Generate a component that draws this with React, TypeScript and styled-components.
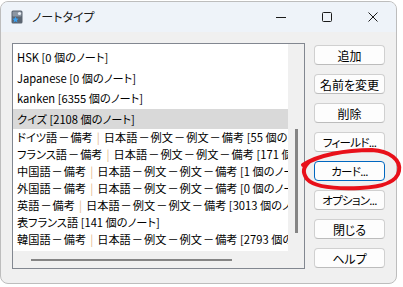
import React from 'react';
import styled, { createGlobalStyle } from 'styled-components';

const GlobalStyle = createGlobalStyle`
    html, body {
        margin: 0;
        padding: 0;
        background: #ffffff;
    }
    body {
        font-family: "Noto Sans CJK JP", "Noto Sans", sans-serif;
        font-feature-settings: "palt";
        color: #000;
    }
`;

const Page = styled.div`
    position: relative;
    width: 403px;
    height: 287px;
    overflow: hidden;
`;

const Window = styled.div`
    box-sizing: border-box;
    width: 397px;
    height: 283px;
    margin-top: 1px;
    border: 1px solid #bdbdbd;
    border-radius: 8px;
    overflow: hidden;
    background: #f0f0f0;
    display: flex;
    flex-direction: column;
`;

const TitleBar = styled.div`
    height: 30px;
    flex: none;
    background: #eef3f9;
    display: flex;
    align-items: center;
`;

const AppIcon = styled.div`
    width: 12px;
    height: 14px;
    margin-left: 10px;
    margin-right: 9px;
    display: flex;
`;

const Title = styled.div`
    flex: 1;
    font-size: 12px;
    color: #1a1a1a;
    line-height: 30px;
`;

const Caption = styled.div`
    width: 46px;
    height: 30px;
    display: flex;
    align-items: center;
    justify-content: center;
`;

const Client = styled.div`
    flex: 1;
    display: flex;
    padding: 11px 0 0 11px;
    gap: 9px;
`;

const ListBox = styled.div`
    box-sizing: border-box;
    width: 293px;
    height: 226px;
    border: 1px solid #828790;
    background: #f0f0f0;
    display: grid;
    grid-template-columns: 1fr 16px;
    grid-template-rows: 1fr 17px;
`;

const Items = styled.div`
    background: #ffffff;
    padding-top: 3px;
    overflow: hidden;
`;

const Row = styled.div<{ $tall?: boolean; $selected?: boolean }>`
    height: ${p => (p.$tall ? '20.5px' : '17px')};
    line-height: ${p => (p.$tall ? '20.5px' : '17px')};
    padding-left: 4px;
    font-size: 11.2px;
    white-space: nowrap;
    overflow: hidden;
    background: ${p => (p.$selected ? '#d9d9d9' : 'transparent')};
`;

const Dash = styled.span`
    margin: 0 1px;
`;

const Bar = styled.span`
    color: #e2b98c;
    margin: 0 4px;
`;

const VTrack = styled.div`
    display: flex;
    justify-content: center;
    padding-top: 85px;
`;

const VThumb = styled.div`
    width: 3px;
    height: 104px;
    background: #858585;
`;

const HTrack = styled.div`
    padding: 8px 0 0 18px;
`;

const HThumb = styled.div`
    width: 201px;
    height: 2px;
    background: #858585;
`;

const Buttons = styled.div`
    display: flex;
    flex-direction: column;
    gap: 9px;
    padding-top: 2px;
`;

const Button = styled.div<{ $focused?: boolean; $tight?: boolean }>`
    box-sizing: border-box;
    width: 71px;
    height: 20px;
    border: 1px solid ${p => (p.$focused ? '#0067c0' : '#d0d0d0')};
    border-bottom-color: ${p => (p.$focused ? '#0067c0' : '#bcbcbc')};
    border-radius: 4px;
    background: #fdfdfd;
    display: flex;
    align-items: center;
    justify-content: center;
    font-size: ${p => (p.$tight ? '11.5px' : '12px')};
    letter-spacing: ${p => (p.$tight ? '-0.7px' : '0')};
    white-space: nowrap;
`;

const Scribble = styled.svg`
    position: absolute;
    left: 0;
    top: 0;
    pointer-events: none;
`;

const sep = (head: string, count: string) => (
    <>
        {head}<Dash>－</Dash>備考<Bar>|</Bar>日本語<Dash>－</Dash>例文<Dash>－</Dash>例文<Dash>－</Dash>備考 [{count} 個のノート]
    </>
);

const rows: { label: React.ReactNode; tall?: boolean; selected?: boolean }[] = [
    { label: 'HSK [0 個のノート]', tall: true },
    { label: 'Japanese [0 個のノート]', tall: true },
    { label: 'kanken [6355 個のノート]', tall: true },
    { label: 'クイズ [2108 個のノート]', tall: true, selected: true },
    { label: sep('ドイツ語', '55') },
    { label: sep('フランス語', '171') },
    { label: sep('中国語', '1') },
    { label: sep('外国語', '0') },
    { label: sep('英語', '3013') },
    { label: '表フランス語 [141 個のノート]' },
    { label: sep('韓国語', '2793') },
];

const buttons = ['追加', '名前を変更', '削除', 'フィールド...', 'カード...', 'オプション...', '閉じる', 'ヘルプ'];

const App: React.FC = () => {
    return (
    <>
        <GlobalStyle />
        <Page>
            <Window>
                <TitleBar>
                    <AppIcon>
                        <svg width="12" height="14" viewBox="0 0 12 14">
                            <rect x="0.5" y="0.5" width="11" height="13" rx="1.5" fill="#5b6571" />
                            <rect x="1.5" y="1.5" width="9" height="5" rx="1" fill="#8c96a2" />
                            <circle cx="8.5" cy="3.5" r="1.6" fill="#e8eef5" />
                            <path d="M4.5 6.5 L5.4 8.6 L7.6 8.8 L5.9 10.2 L6.5 12.4 L4.5 11.2 L2.5 12.4 L3.1 10.2 L1.4 8.8 L3.6 8.6 Z" fill="#3aa0f0" />
                        </svg>
                    </AppIcon>
                    <Title>ノートタイプ</Title>
                    <Caption>
                        <svg width="10" height="10" viewBox="0 0 10 10">
                            <line x1="0" y1="5.5" x2="10" y2="5.5" stroke="#1a1a1a" strokeWidth="1" />
                        </svg>
                    </Caption>
                    <Caption>
                        <svg width="10" height="10" viewBox="0 0 10 10">
                            <rect x="0.5" y="0.5" width="9" height="9" rx="1" fill="none" stroke="#1a1a1a" strokeWidth="1" />
                        </svg>
                    </Caption>
                    <Caption>
                        <svg width="10" height="10" viewBox="0 0 10 10">
                            <path d="M0.5 0.5 L9.5 9.5 M9.5 0.5 L0.5 9.5" stroke="#1a1a1a" strokeWidth="1" />
                        </svg>
                    </Caption>
                </TitleBar>
                <Client>
                    <ListBox>
                        <Items>
                            {rows.map((r, i) => (
                                <Row key={i} $tall={r.tall} $selected={r.selected}>{r.label}</Row>
                            ))}
                        </Items>
                        <VTrack><VThumb /></VTrack>
                        <HTrack><HThumb /></HTrack>
                        <div />
                    </ListBox>
                    <Buttons>
                        {buttons.map(b => (
                            <Button key={b} $focused={b === 'カード...'} $tight={b.endsWith('...')}>{b}</Button>
                        ))}
                    </Buttons>
                </Client>
            </Window>
            <Scribble width="403" height="287" viewBox="0 0 403 287">
                <path
                    d="M303 165 C318 155, 345 150, 372 150 C390 151, 401 160, 399 171 C397 182, 384 187, 360 188 C335 189, 314 187, 307 179 C302 172, 303 167, 310 161"
                    fill="none"
                    stroke="#e8101a"
                    strokeWidth="4"
                    strokeLinecap="round"
                />
            </Scribble>
        </Page>
    </>
    );
};

export default App;
